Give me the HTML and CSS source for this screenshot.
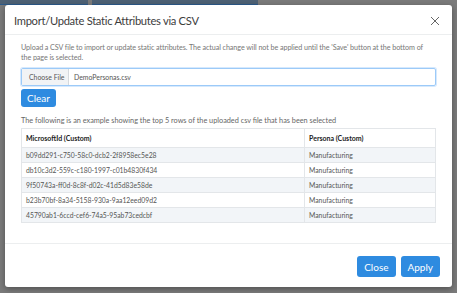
FILE: index.html
```html
<!DOCTYPE html>
<html>
<head>
<meta charset="utf-8">
<link rel="stylesheet" href="styles.css">
</head>
<body>
<div class="backdrop">
  <div class="bg-tabs">
    <div class="bg-tab tab-a"></div>
    <div class="bg-tab tab-b"></div>
  </div>
</div>
<div class="modal">
  <div class="modal-header">
    <h1 class="modal-title">Import/Update Static Attributes via CSV</h1>
    <svg class="close-x" width="10" height="10" viewBox="0 0 10 10"><path d="M1 1L9 9M9 1L1 9" stroke="#666" stroke-width="1" fill="none"/></svg>
  </div>
  <div class="modal-body">
    <p class="intro">Upload a CSV file to import or update static attributes. The actual change will not be applied until the 'Save' button at the bottom of the page is selected.</p>
    <div class="file-input">
      <span class="file-btn">Choose File</span>
      <span class="file-name">DemoPersonas.csv</span>
    </div>
    <button class="btn btn-clear">Clear</button>
    <p class="caption">The following is an example showing the top 5 rows of the uploaded csv file that has been selected</p>
    <table class="preview">
      <thead>
        <tr><th class="c1">MicrosoftId (Custom)</th><th>Persona (Custom)</th></tr>
      </thead>
      <tbody>
        <tr><td>b09dd291-c750-58c0-dcb2-2f8958ec5e28</td><td>Manufacturing</td></tr>
        <tr><td>db10c3d2-559c-c180-1997-c01b4830f434</td><td>Manufacturing</td></tr>
        <tr><td>9f50743a-ff0d-8c8f-d02c-41d5d83e58de</td><td>Manufacturing</td></tr>
        <tr><td>b23b70bf-8a34-5158-930a-9aa12eed09d2</td><td>Manufacturing</td></tr>
        <tr><td>45790ab1-6ccd-cef6-74a5-95ab73cedcbf</td><td>Manufacturing</td></tr>
      </tbody>
    </table>
  </div>
  <div class="modal-footer">
    <button class="btn">Close</button>
    <button class="btn">Apply</button>
  </div>
</div>
</body>
</html>
```
FILE: styles.css
```css
html, body {
  margin: 0;
  padding: 0;
}
body {
  width: 457px;
  height: 293px;
  overflow: hidden;
  background: #7b7b7b;
  font-family: Lato, "Open Sans", sans-serif;
  position: relative;
}
.backdrop {
  position: absolute;
  inset: 0;
}
.bg-tabs {
  display: flex;
  gap: 4px;
}
.bg-tab {
  height: 4px;
  background: #4d6175;
  border-bottom: 1px solid #2c5b8c;
}
.tab-a { width: 88px; }
.tab-b { width: 166px; }
.modal {
  position: absolute;
  left: 5px;
  top: 5px;
  width: 447px;
  height: 282px;
  background: #fff;
  border-radius: 3px;
  box-shadow: 0 2px 6px rgba(0,0,0,0.35);
  display: flex;
  flex-direction: column;
}
.modal-header {
  height: 30px;
  border-bottom: 1px solid #eceeef;
  display: flex;
  align-items: center;
  justify-content: space-between;
  padding: 2px 9px 0 9px;
  box-sizing: border-box;
}
.modal-title {
  margin: 0;
  font-size: 11.2px;
  letter-spacing: -0.3px;
  font-weight: 400;
  color: #3d3d3d;
}
.close-x {
  margin-right: 3px;
}
.modal-body {
  padding: 8px 16px 0 16px;
  flex: 1;
}
.intro {
  margin: 0;
  max-width: 412px;
  font-size: 7.2px;
  letter-spacing: -0.08px;
  line-height: 9.5px;
  color: #777;
}
.file-input {
  margin-top: 6px;
  height: 16px;
  border: 1px solid #9ccaf8;
  border-radius: 2px;
  box-shadow: 0 0 0 1px #d6e9fd;
  display: flex;
  align-items: stretch;
  font-size: 6.9px;
  color: #555;
}
.file-btn {
  background: #f1f3f5;
  border-right: 1px solid #d5d9dd;
  width: 47px;
  box-sizing: border-box;
  padding: 0 0 0 7px;
  display: flex;
  align-items: center;
}
.file-name {
  display: flex;
  align-items: center;
  padding-left: 5px;
}
.btn {
  border: none;
  background: #2e8be0;
  color: #fff;
  font-family: Lato, "Open Sans", sans-serif;
  font-size: 10px;
  border-radius: 3px;
  padding: 0 7px;
  height: 21px;
}
.btn-clear {
  margin-top: 3px;
  height: 18px;
  font-size: 10px;
  padding: 0 6px;
}
.caption {
  margin: 9px 0 0 0;
  font-size: 7.3px;
  color: #666;
  line-height: 9px;
}
.preview {
  margin-top: 3px;
  width: 100%;
  border-collapse: collapse;
  font-size: 6.8px;
  color: #555;
}
.preview th, .preview td {
  border: 1px solid #e3e6e9;
  text-align: left;
  padding: 0 4px;
}
.preview th {
  height: 18px;
  font-weight: 700;
  font-size: 7px;
  color: #222;
}
.preview td {
  height: 14px;
}
.preview .c1 {
  width: 274px;
}
.preview tbody tr:nth-child(odd) td {
  background: #f2f5f8;
}
.modal-footer {
  height: 43px;
  border-top: 1px solid #eceeef;
  display: flex;
  justify-content: flex-end;
  align-items: center;
  gap: 5px;
  padding: 0 12px 0 0;
}
.modal-footer .btn {
  margin-top: 2px;
}
```
